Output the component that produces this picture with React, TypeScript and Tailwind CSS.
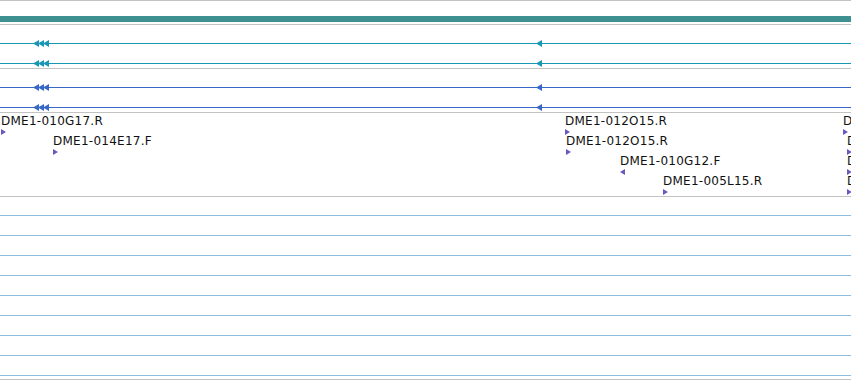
const TEAL = "#1897b5";
const BLUE = "#3768c8";

function Arrows({ x, count, color }: { x: number; count: number; color: string }) {
  const w = 5 * count + 1;
  return (
    <svg
      className="absolute top-[-3px]"
      style={{ left: x }}
      width={w}
      height={7}
      viewBox={`0 0 ${w} 7`}
      aria-hidden="true"
    >
      {Array.from({ length: count }).map((_, i) => (
        <polygon key={i} points={`${i * 5 + 6},0 ${i * 5},3.5 ${i * 5 + 6},7`} fill={color} />
      ))}
    </svg>
  );
}

function FeatureLine({ color }: { color: string }) {
  return (
    <div className="relative h-px shrink-0" style={{ backgroundColor: color }}>
      <Arrows x={33} count={3} color={color} />
      <Arrows x={536} count={1} color={color} />
    </div>
  );
}

function Marker({ x, left }: { x: number; left?: boolean }) {
  return (
    <svg
      className="absolute top-[16px]"
      style={{ left: x }}
      width={6}
      height={6}
      viewBox="0 0 6 6"
      aria-hidden="true"
    >
      <polygon points={left ? "5,0 0,3 5,6" : "0,0 5,3 0,6"} fill="#6b57c0" />
    </svg>
  );
}

type Read = { x: number; label: string; left?: boolean };

const rows: Read[][] = [
  [
    { x: 1, label: "DME1-010G17.R" },
    { x: 565, label: "DME1-012O15.R" },
    { x: 843, label: "DME1-012O15.F" },
  ],
  [
    { x: 53, label: "DME1-014E17.F" },
    { x: 566, label: "DME1-012O15.R" },
    { x: 847, label: "DME1-012O15.F" },
  ],
  [
    { x: 620, label: "DME1-010G12.F", left: true },
    { x: 847, label: "DME1-012O15.F" },
  ],
  [
    { x: 663, label: "DME1-005L15.R" },
    { x: 847, label: "DME1-012O15.F" },
  ],
];

function Gray() {
  return <div className="h-px shrink-0 bg-[#c2c2c2]" />;
}

export default function App() {
  return (
    <div className="w-[851px] h-[380px] overflow-hidden bg-white flex flex-col font-['DejaVu_Sans',sans-serif]">
      <Gray />
      <div className="h-[15px] shrink-0" />
      <div className="h-[6px] shrink-0 bg-[#3f9090]" />
      <div className="h-[2px] shrink-0" />
      <Gray />
      <div className="h-[18px] shrink-0" />
      <FeatureLine color={TEAL} />
      <div className="h-[19px] shrink-0" />
      <FeatureLine color={TEAL} />
      <div className="h-[4px] shrink-0" />
      <Gray />
      <div className="h-[18px] shrink-0" />
      <FeatureLine color={BLUE} />
      <div className="h-[19px] shrink-0" />
      <FeatureLine color={BLUE} />
      <div className="h-[4px] shrink-0" />
      <Gray />
      <div className="flex flex-col h-[83px] shrink-0">
        {rows.map((row, i) => (
          <div key={i} className="relative h-[20px] shrink-0">
            {row.map((r) => (
              <div key={r.x}>
                <span
                  className="absolute top-[1px] text-[12px] leading-[14px] tracking-[0.25px] text-[#111] whitespace-nowrap"
                  style={{ left: r.x }}
                >
                  {r.label}
                </span>
                <Marker x={r.x} left={r.left} />
              </div>
            ))}
          </div>
        ))}
      </div>
      <Gray />
      <div className="h-[18px] shrink-0" />
      {Array.from({ length: 9 }).map((_, i) => (
        <div key={i} className="flex flex-col shrink-0">
          {i > 0 && <div className="h-[19px]" />}
          <div className="h-px bg-[#8fbbdc]" />
        </div>
      ))}
      <div className="h-[3px] shrink-0" />
      <Gray />
    </div>
  );
}
